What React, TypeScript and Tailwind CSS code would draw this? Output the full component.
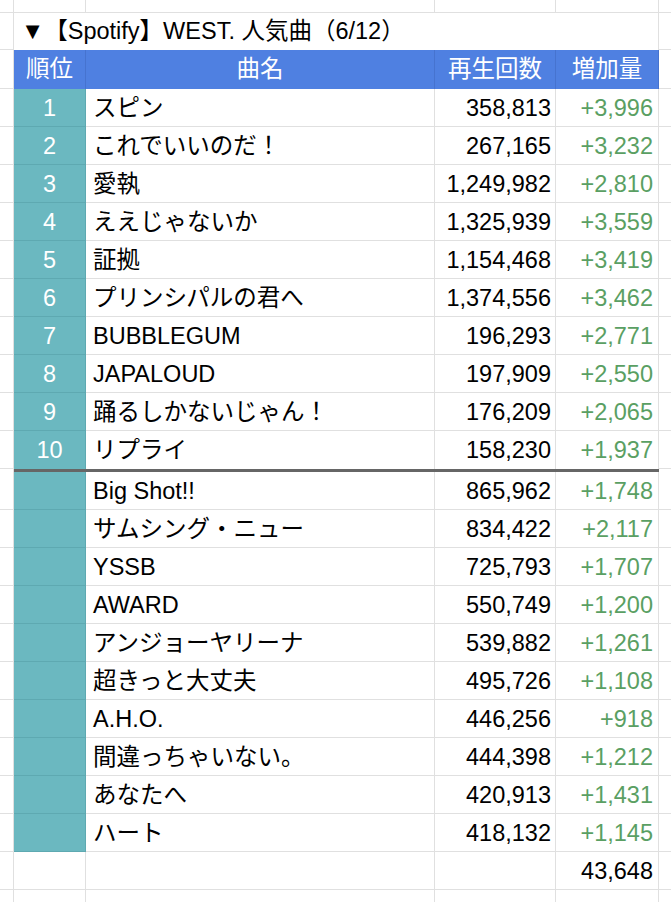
import React from "react";

const top10: [string, string, string][] = [
  ["スピン", "358,813", "+3,996"],
  ["これでいいのだ！", "267,165", "+3,232"],
  ["愛執", "1,249,982", "+2,810"],
  ["ええじゃないか", "1,325,939", "+3,559"],
  ["証拠", "1,154,468", "+3,419"],
  ["プリンシパルの君へ", "1,374,556", "+3,462"],
  ["BUBBLEGUM", "196,293", "+2,771"],
  ["JAPALOUD", "197,909", "+2,550"],
  ["踊るしかないじゃん！", "176,209", "+2,065"],
  ["リプライ", "158,230", "+1,937"],
];

const rest: [string, string, string][] = [
  ["Big Shot!!", "865,962", "+1,748"],
  ["サムシング・ニュー", "834,422", "+2,117"],
  ["YSSB", "725,793", "+1,707"],
  ["AWARD", "550,749", "+1,200"],
  ["アンジョーヤリーナ", "539,882", "+1,261"],
  ["超きっと大丈夫", "495,726", "+1,108"],
  ["A.H.O.", "446,256", "+918"],
  ["間違っちゃいない。", "444,398", "+1,212"],
  ["あなたへ", "420,913", "+1,431"],
  ["ハート", "418,132", "+1,145"],
];

const cols = "grid grid-cols-[14px_72px_349px_121px_103px_12px]";
const g = "border-[#e0e0e0]";

function DataRow({ rank, name, plays, inc, last }: { rank: string; name: string; plays: string; inc: string; last?: boolean }) {
  const bb = last ? "" : "border-b";
  return (
    <div className={`${cols} h-[38px]`}>
      <div className={`border-r border-b ${g}`} />
      <div className={`bg-[#6bb8c0] border-r ${bb} border-[#5ea9b1] flex items-center justify-center pt-[2px] text-white`}>{rank}</div>
      <div className={`border-r ${bb} ${g} flex items-center pl-[7px] pt-[2px] text-black whitespace-nowrap`}>{name}</div>
      <div className={`border-r ${bb} ${g} flex items-center justify-end pr-[4px] pt-[2px] text-black`}>{plays}</div>
      <div className={`border-r ${bb} ${g} flex items-center justify-end pr-[5px] pt-[2px] text-[#5a9f63]`}>{inc}</div>
      <div className={`border-b ${g}`} />
    </div>
  );
}

export default function App() {
  return (
    <div
      className="w-[671px] h-[902px] bg-white overflow-hidden text-[23.5px] leading-none"
      style={{ fontFamily: '"Liberation Sans", "Noto Sans CJK JP", sans-serif' }}
    >
      {/* top partial row */}
      <div className={`${cols} h-[13px]`}>
        <div className={`border-r border-b ${g}`} />
        <div className={`border-r border-b ${g}`} />
        <div className={`border-r border-b ${g}`} />
        <div className={`border-r border-b ${g}`} />
        <div className={`border-r border-b ${g}`} />
        <div className={`border-b ${g}`} />
      </div>
      {/* title row */}
      <div className={`${cols} h-[37px]`}>
        <div className={`border-r border-b ${g}`} />
        <div className={`col-span-4 border-r ${g} flex items-center pl-[7px] pt-[1px] text-black whitespace-nowrap`}>
          ▼【Spotify】WEST. 人気曲（6/12）
        </div>
        <div className={`border-b ${g}`} />
      </div>
      {/* header */}
      <div className={`${cols} h-[39px]`}>
        <div className={`border-r border-b ${g}`} />
        <div className="bg-[#4f80e1] border-r border-[#4673cf] flex items-center justify-center pt-[1px] text-white">順位</div>
        <div className="bg-[#4f80e1] border-r border-[#4673cf] flex items-center justify-center pt-[1px] text-white">曲名</div>
        <div className="bg-[#4f80e1] border-r border-[#4673cf] flex items-center justify-center pt-[1px] text-white">再生回数</div>
        <div className="bg-[#4f80e1] border-r border-[#4673cf] flex items-center justify-center pt-[1px] text-white">増加量</div>
        <div className={`border-b ${g}`} />
      </div>
      {top10.map((r, i) => (
        <DataRow key={i} rank={String(i + 1)} name={r[0]} plays={r[1]} inc={r[2]} last={i === 9} />
      ))}
      {/* separator */}
      <div className={`${cols} h-[3px]`}>
        <div className={`border-r ${g}`} />
        <div className="col-span-4 bg-[#666666]" />
        <div />
      </div>
      {rest.map((r, i) => (
        <DataRow key={i} rank="" name={r[0]} plays={r[1]} inc={r[2]} />
      ))}
      {/* total row */}
      <div className={`${cols} h-[38px]`}>
        <div className={`border-r border-b ${g}`} />
        <div className={`border-r border-b ${g}`} />
        <div className={`border-r border-b ${g}`} />
        <div className={`border-r border-b ${g}`} />
        <div className={`border-r border-b ${g} flex items-center justify-end pr-[5px] pt-[2px] text-black`}>43,648</div>
        <div className={`border-b ${g}`} />
      </div>
      {/* bottom partial */}
      <div className={`${cols} h-[13px]`}>
        <div className={`border-r ${g}`} />
        <div className={`border-r ${g}`} />
        <div className={`border-r ${g}`} />
        <div className={`border-r ${g}`} />
        <div className={`border-r ${g}`} />
        <div />
      </div>
    </div>
  );
}
